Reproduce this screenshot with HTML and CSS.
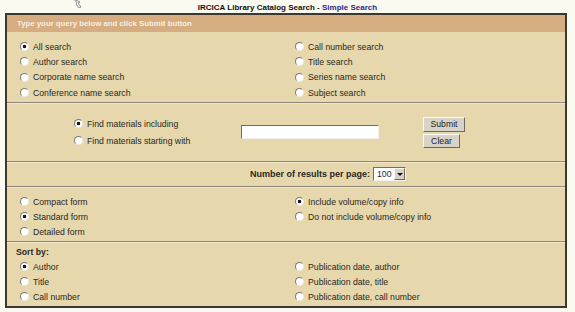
FILE: index.html
```html
<html>
    <head>
        <link rel="stylesheet" href="styles.css">
    </head>
    <body>
        <svg class="cursor" width="10" height="9" viewBox="0 0 10 9">
            <path d="M1 0 L4 4 L3 5 L6 9 L8 8 L5 4 L7 3 Z" fill="#fff" stroke="#8a8a8a" stroke-width="1"/>
        </svg>
        <div class="title">IRCICA Library Catalog Search - <span class="mode">Simple Search</span></div>
        <form class="box">
            <div class="bar">Type your query below and click Submit button</div>

            <div class="sec cols types">
                <label class="opt"><input type="radio" name="type" checked>All search</label>
                <label class="opt"><input type="radio" name="type">Call number search</label>
                <label class="opt"><input type="radio" name="type">Author search</label>
                <label class="opt"><input type="radio" name="type">Title search</label>
                <label class="opt"><input type="radio" name="type">Corporate name search</label>
                <label class="opt"><input type="radio" name="type">Series name search</label>
                <label class="opt"><input type="radio" name="type">Conference name search</label>
                <label class="opt"><input type="radio" name="type">Subject search</label>
            </div>

            <div class="sec find">
                <div class="how">
                    <label class="opt"><input type="radio" name="how" checked>Find materials including</label>
                    <label class="opt"><input type="radio" name="how">Find materials starting with</label>
                </div>
                <div class="query"><input type="text" class="field"></div>
                <div class="buttons">
                    <button type="button" class="btn submit">Submit</button>
                    <button type="button" class="btn clear">Clear</button>
                </div>
            </div>

            <div class="sec results">
                <b>Number of results per page:</b>
                <span class="select"><span class="val">100</span><span class="drop"><span class="tri"></span></span></span>
            </div>

            <div class="sec cols forms">
                <label class="opt"><input type="radio" name="form">Compact form</label>
                <label class="opt"><input type="radio" name="vol" checked>Include volume/copy info</label>
                <label class="opt"><input type="radio" name="form" checked>Standard form</label>
                <label class="opt"><input type="radio" name="vol">Do not include volume/copy info</label>
                <label class="opt"><input type="radio" name="form">Detailed form</label>
                <div></div>
            </div>

            <div class="sec cols sort">
                <div class="label">Sort by:</div>
                <div></div>
                <label class="opt"><input type="radio" name="sort" checked>Author</label>
                <label class="opt"><input type="radio" name="sort">Publication date, author</label>
                <label class="opt"><input type="radio" name="sort">Title</label>
                <label class="opt"><input type="radio" name="sort">Publication date, title</label>
                <label class="opt"><input type="radio" name="sort">Call number</label>
                <label class="opt"><input type="radio" name="sort">Publication date, call number</label>
            </div>
        </form>
    </body>
</html>
```

FILE: styles.css
```css
body, html {
    margin: 0;
    background: #fbfaf1;
    font-family: "Liberation Sans", Arial, sans-serif;
    color: #2a2823;
}
body {
    position: relative;
    width: 575px;
    height: 312px;
    overflow: hidden;
}
.cursor {
    position: absolute;
    left: 73px;
    top: -1px;
}
.title {
    height: 13px;
    box-sizing: border-box;
    padding-top: 3px;
    text-align: center;
    font-size: 8px;
    line-height: 9px;
    font-weight: bold;
    color: #111;
}
.mode {
    color: #1b2a8f;
}
.box {
    display: block;
    margin: 0 0 0 5px;
    width: 558px;
    border: 2px solid #3b382f;
    background: #e6d7ac;
}
.bar {
    height: 17px;
    line-height: 17px;
    padding-left: 10px;
    background: #d5ad80;
    color: #f7eee0;
    font-size: 7.8px;
    font-weight: bold;
}
.sec {
    box-sizing: border-box;
    font-size: 8.7px;
}
.sec + .sec {
    border-top: 1px solid #8e8779;
    box-shadow: inset 0 1px 0 #f0e7cc;
}
.cols {
    display: grid;
    grid-template-columns: 275px 1fr;
    padding-left: 9px;
}
.opt {
    display: flex;
    align-items: center;
    padding-left: 4px;
}
.opt input {
    appearance: none;
    -webkit-appearance: none;
    box-sizing: border-box;
    width: 9px;
    height: 9px;
    margin: 0 4px 0 0;
    border-radius: 50%;
    border: 1px solid;
    border-color: #7e7b74 #ebe8e0 #ebe8e0 #7e7b74;
    background: #fff;
}
.opt input:checked {
    background: radial-gradient(circle, #1a1a1a 0 1.4px, #fff 2.1px);
}
.types {
    height: 70px;
    padding-top: 7px;
    grid-auto-rows: 15.3px;
}
.find {
    height: 59px;
    padding-left: 67px;
    display: grid;
    grid-template-columns: 167px 182px auto;
    align-items: center;
    align-content: center;
}
.how .opt {
    height: 17px;
    padding-left: 0;
}
.field {
    box-sizing: border-box;
    width: 138px;
    height: 14px;
    margin: 0;
    border: 1px solid;
    border-color: #6f6d68 #f4f2ec #f4f2ec #6f6d68;
    background: #fff;
}
.buttons {
    display: flex;
    flex-direction: column;
    gap: 2px;
}
.btn {
    box-sizing: border-box;
    height: 15px;
    padding: 0;
    font-family: inherit;
    font-size: 8.7px;
    color: #222;
    background: #d8d3c8;
    border: 1px solid;
    border-color: #fbfaf6 #6c6a64 #6c6a64 #fbfaf6;
}
.submit {
    width: 42px;
}
.clear {
    width: 37px;
    height: 14px;
}
.results {
    height: 25px;
    padding-left: 243px;
    display: flex;
    align-items: center;
}
.results b {
    font-size: 9px;
}
.select {
    display: flex;
    margin-left: 3px;
    width: 33px;
    height: 14px;
    box-sizing: border-box;
    border: 1px solid;
    border-color: #6f6d68 #f4f2ec #f4f2ec #6f6d68;
    background: #fff;
}
.val {
    flex: 1;
    padding-left: 3px;
    line-height: 12px;
}
.drop {
    width: 11px;
    box-sizing: border-box;
    background: #d8d3c8;
    border: 1px solid;
    border-color: #fbfaf6 #6c6a64 #6c6a64 #fbfaf6;
    display: flex;
    align-items: center;
    justify-content: center;
}
.tri {
    border-left: 3px solid transparent;
    border-right: 3px solid transparent;
    border-top: 3px solid #111;
}
.forms {
    height: 55px;
    padding-top: 7px;
    grid-auto-rows: 15px;
}
.sort {
    height: 65px;
    padding-top: 2px;
    grid-auto-rows: 15px;
}
.label {
    display: flex;
    align-items: center;
    font-weight: bold;
    font-size: 8.7px;
}
```
